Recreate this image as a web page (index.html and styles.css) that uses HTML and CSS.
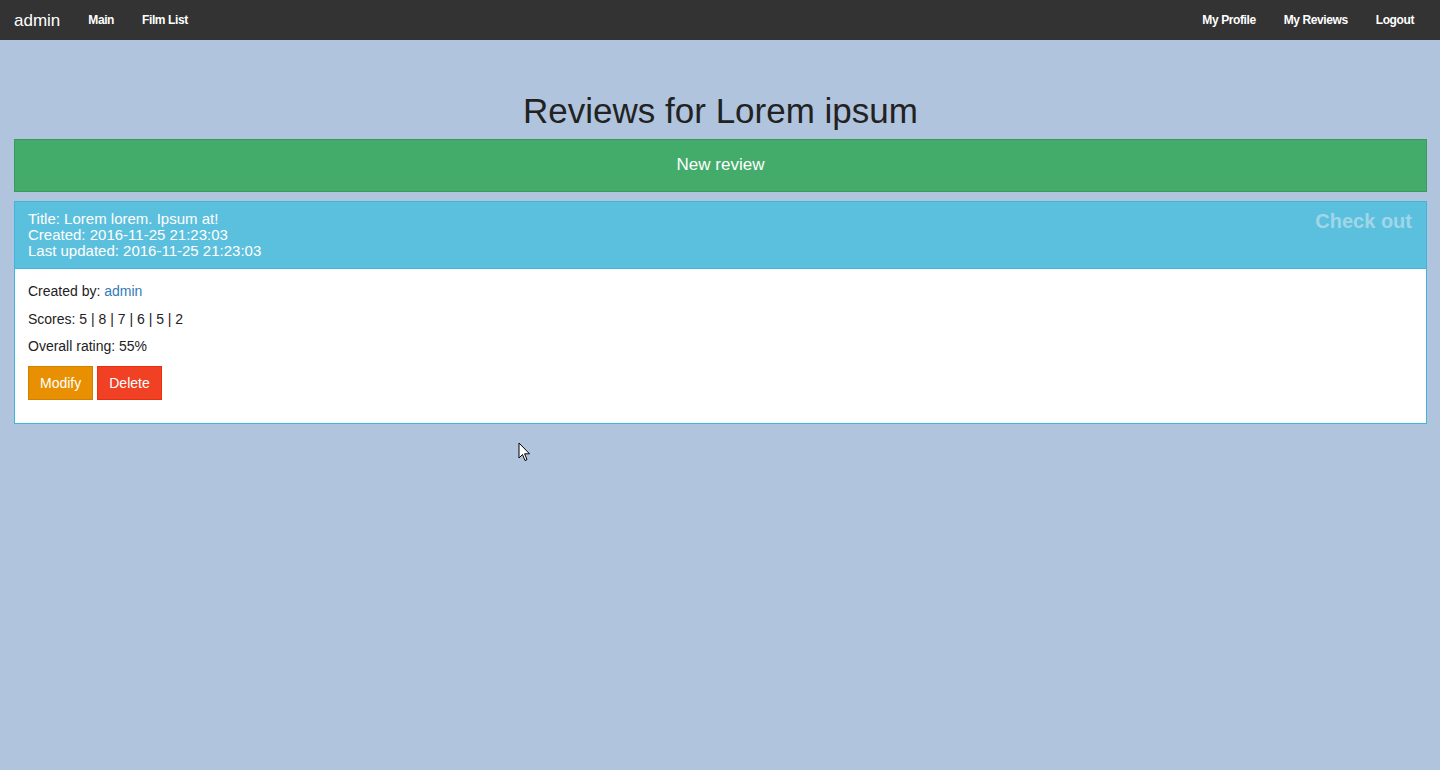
FILE: index.html
```html
<!DOCTYPE html>
<html lang="en">
<head>
<meta charset="utf-8">
<title>Reviews for Lorem ipsum</title>
<link rel="stylesheet" href="styles.css">
</head>
<body>
<nav class="navbar">
  <div class="nav-left">
    <a class="brand" href="#">admin</a>
    <a class="nav-link" href="#">Main</a>
    <a class="nav-link" href="#">Film List</a>
  </div>
  <div class="nav-right">
    <a class="nav-link" href="#">My Profile</a>
    <a class="nav-link" href="#">My Reviews</a>
    <a class="nav-link" href="#">Logout</a>
  </div>
</nav>
<main class="main">
  <h1 class="title">Reviews for Lorem ipsum</h1>
  <a class="new-review" href="#">New review</a>
  <section class="panel">
    <div class="panel-heading">
      <div class="meta">
        <div>Title: Lorem lorem. Ipsum at!</div>
        <div>Created: 2016-11-25 21:23:03</div>
        <div>Last updated: 2016-11-25 21:23:03</div>
      </div>
      <a class="check-out" href="#">Check out</a>
    </div>
    <div class="panel-body">
      <p class="line">Created by: <a class="user-link" href="#">admin</a></p>
      <p class="line">Scores: 5 | 8 | 7 | 6 | 5 | 2</p>
      <p class="line">Overall rating: 55%</p>
      <div class="actions">
        <a class="btn btn-warning" href="#">Modify</a>
        <a class="btn btn-danger" href="#">Delete</a>
      </div>
    </div>
  </section>
</main>
<svg class="cursor" width="13" height="20" viewBox="0 0 13 20" aria-hidden="true">
  <path d="M1 1 L1 16 L4.5 12.5 L7 18.5 L9 17.6 L6.6 11.8 L11.5 11.8 Z" fill="#fff" stroke="#000" stroke-width="1" stroke-linejoin="miter"/>
</svg>
</body>
</html>
```
FILE: styles.css
```css
* { box-sizing: border-box; }

html, body {
  margin: 0;
  padding: 0;
}

body {
  background: #b0c4de;
  font-family: "Liberation Sans", Arial, sans-serif;
  color: #222;
  min-height: 770px;
  position: relative;
}

a { text-decoration: none; }

.navbar {
  height: 40px;
  background: #333;
  display: flex;
  justify-content: space-between;
  align-items: stretch;
  padding: 0 12px 0 0;
}

.nav-left, .nav-right {
  display: flex;
  align-items: stretch;
}

.brand {
  display: flex;
  align-items: center;
  padding: 1px 14px 0;
  color: #fff;
  font-size: 17px;
}

.nav-link {
  display: flex;
  align-items: center;
  padding: 0 14px;
  color: #fff;
  font-size: 12px;
  font-weight: bold;
  letter-spacing: -0.4px;
}

.main {
  padding: 0 13px 0 14px;
}

.title {
  margin: 51px 0 8px;
  font-size: 35px;
  font-weight: normal;
  line-height: 40px;
  text-align: center;
  color: #222;
}

.new-review {
  display: block;
  background: #43ac6a;
  border: 1px solid #3a9a5e;
  color: #fff;
  text-align: center;
  font-size: 17px;
  line-height: 20px;
  padding: 15px 0 16px;
  margin-bottom: 9px;
}

.panel {
  border: 1px solid #3fb5dd;
  background: #fff;
}

.panel-heading {
  background: #5bc0de;
  border-bottom: 1px solid #3fb5dd;
  padding: 9px 14px 9px 13px;
  display: flex;
  justify-content: space-between;
  align-items: flex-start;
  color: #fff;
}

.meta {
  font-size: 15px;
  line-height: 16px;
}

.check-out {
  font-size: 20px;
  font-weight: bold;
  line-height: 20px;
  color: #a0d6e8;
}

.panel-body {
  padding: 14px 13px 13px;
}

.line {
  margin: 0 0 10px;
  font-size: 14px;
  line-height: 17.5px;
  color: #222;
}

.user-link {
  color: #337ab7;
}

.actions {
  display: flex;
  gap: 4px;
  margin: 8px 0 10px;
}

.btn {
  display: inline-block;
  font-size: 14px;
  line-height: 20px;
  padding: 6px 11px;
  color: #fff;
  border: 1px solid transparent;
}

.btn-warning {
  background: #e99002;
  border-color: #d08002;
}

.btn-danger {
  background: #f04124;
  border-color: #ea2f10;
}

.cursor {
  position: absolute;
  left: 518px;
  top: 442px;
}
```
